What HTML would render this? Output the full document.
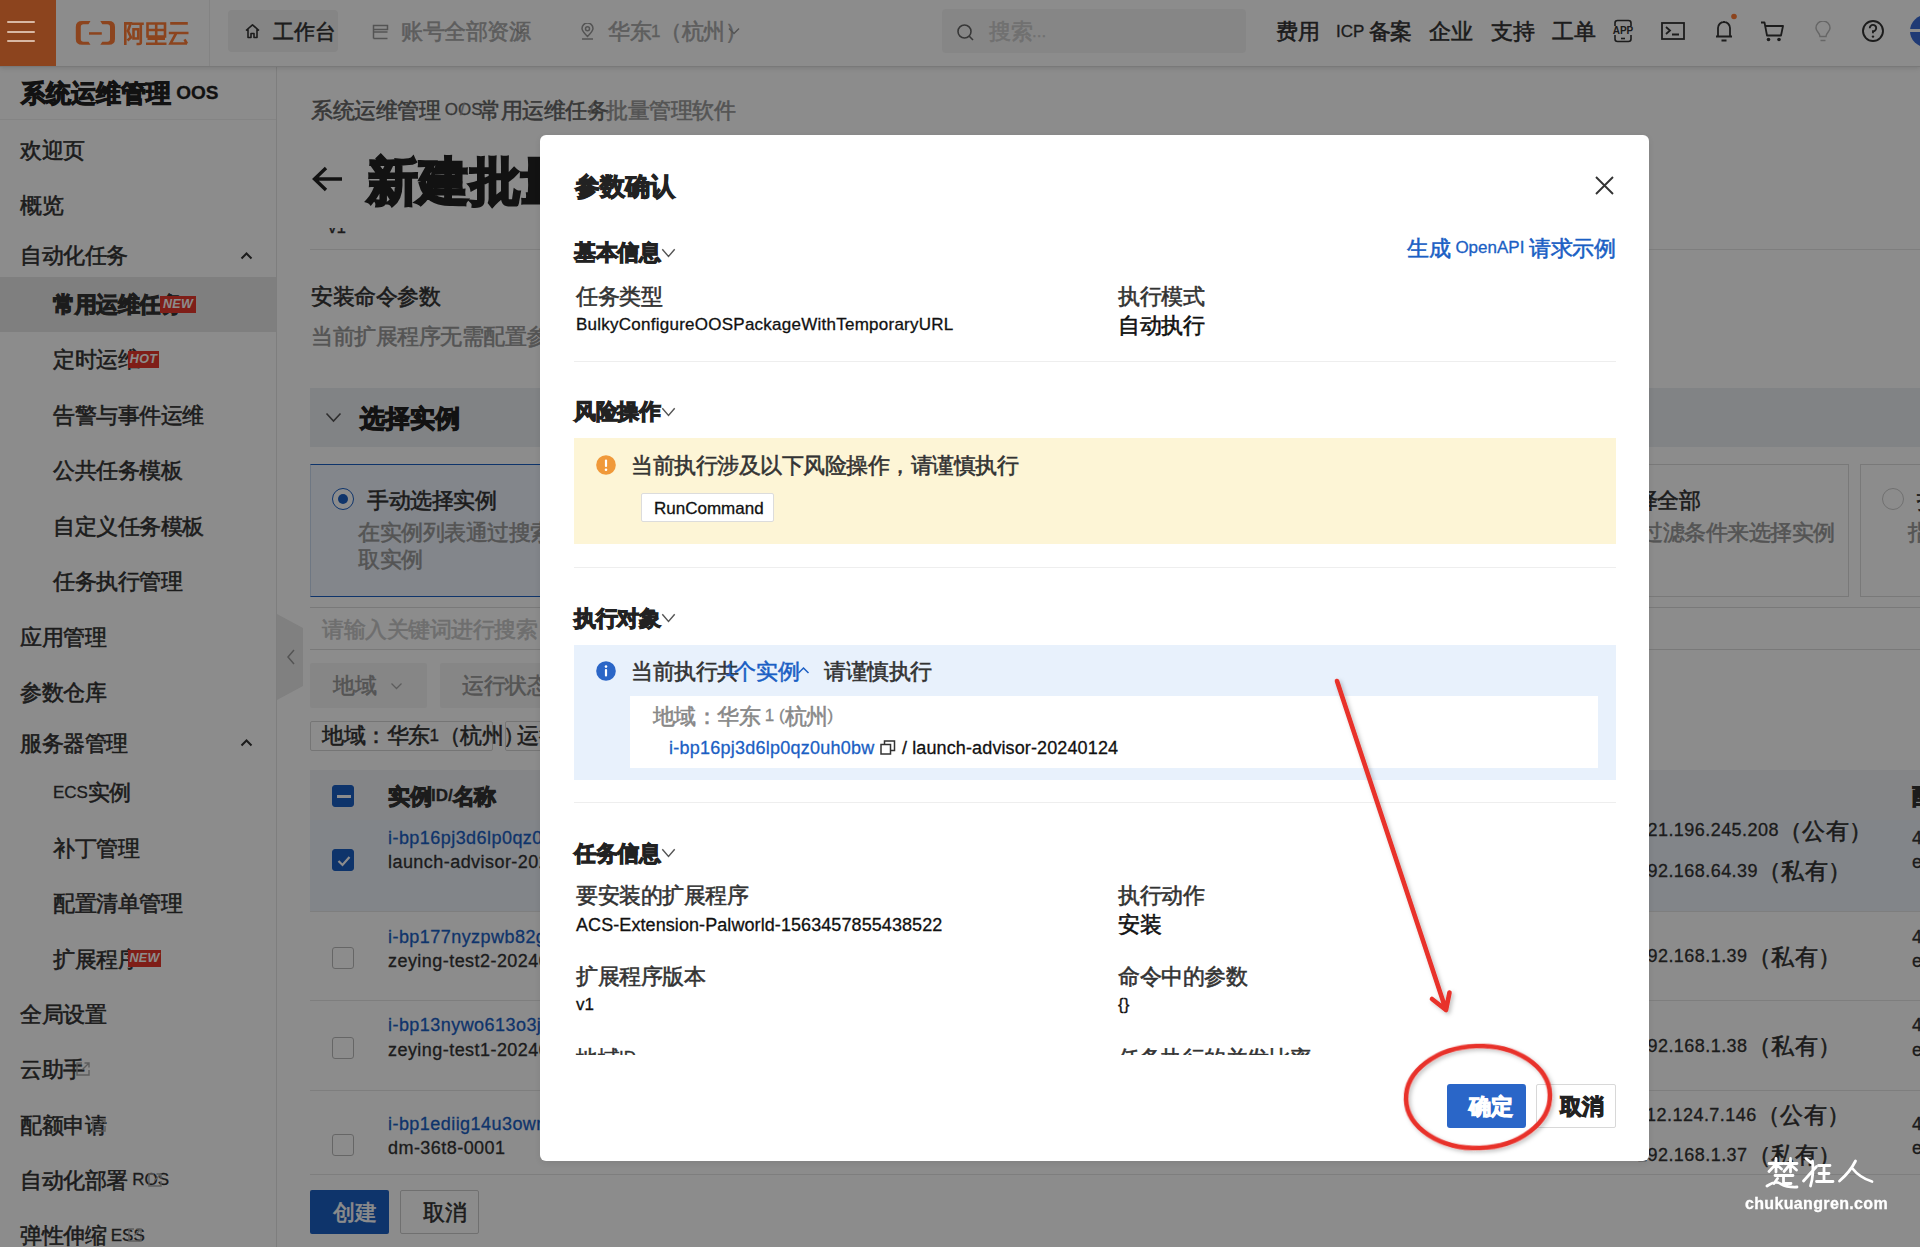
<!DOCTYPE html>
<html><head><meta charset="utf-8"><title>参数确认</title><style>
*{box-sizing:content-box}
html,body{margin:0;padding:0;width:1920px;height:1247px;overflow:hidden;background:#fff}
body{position:relative;font-family:"Liberation Sans",sans-serif;}
.r{position:absolute}
.t{position:absolute;white-space:nowrap;line-height:1;-webkit-text-stroke:.3px currentColor}
.c{line-height:0;position:relative;top:.13em;-webkit-text-stroke:.55px currentColor}
.bd .c{-webkit-text-stroke:var(--st,1.1px) currentColor}
.c2{font-size:1em}
.badge{background:#e8382c;color:#fff;font:italic bold 12.5px/17px "Liberation Sans",sans-serif;text-align:center;letter-spacing:.3px}
.cbx{width:22px;height:22px;box-sizing:border-box;border:1.5px solid #bbb;border-radius:3px;background:#fff}
.cbx.on{background:#1b5fc4;border-color:#1b5fc4}
</style></head><body>
<div class="r" style="left:0px;top:0px;width:1920px;height:66px;background:#fff;box-shadow:0 1px 0 #dcdcdc,0 2px 5px rgba(0,0,0,.14);z-index:2"></div>
<div class="r" style="left:0;top:0;width:1920px;height:66px;z-index:3"><div class="r" style="left:0px;top:0px;width:56px;height:66px;background:#ff7d37"></div>
<svg class="r" style="left:0;top:0" width="200" height="66" viewBox="0 0 200 66"><g fill="#ff7d37"><path d="M90.5 21.1H82Q75.8 21.1 75.8 27V39Q75.8 44.8 82 44.8H90.5L88.5 41.8H83.5Q80.8 41.8 80.8 39V27Q80.8 24.2 83.5 24.2H88.5Z"/><path d="M100.3 21.1H108.8Q115 21.1 115 27V39Q115 44.8 108.8 44.8H100.3L102.3 41.8H107.3Q110 41.8 110 39V27Q110 24.2 107.3 24.2H102.3Z"/><rect x="89" y="32.2" width="12.8" height="2.5"/></g><g fill="none" stroke="#ff7d37" stroke-width="2.6" stroke-linejoin="miter"><path d="M125.3 45V23.4H130.6L128 31 131 37.5 127.5 40.5"/><path d="M131.5 23.7H143.8M140.8 23.7V42.5Q140.8 44 139 44H136.5"/><path d="M133.5 29.3H138.3V38.5H133.5Z"/><path d="M147.5 23.5H165V36.5H147.5ZM147.5 30H165M156.2 23.5V43.5M147.5 38.8H165M146 43.7H166.5"/><path d="M170.2 23.4H187.8M168.8 33H188.5M176 33.5L170.5 43.5H187M184.5 39.3L187 43.6"/></g></svg>
<div class="r" style="left:209px;top:0px;width:1px;height:66px;background:#eee"></div>
<div class="r" style="left:228px;top:10px;width:110px;height:42px;background:#f2f2f2;border-radius:4px"></div>
<svg class="r" style="left:244px;top:23px" width="17" height="16" viewBox="0 0 17 16"><path d="M2 7.5L8.5 1.8 15 7.5M4 6V14.5H7V10.5H10V14.5H13V6" fill="none" stroke="#333" stroke-width="1.6" stroke-linejoin="round"/></svg>
<div class="t" style="left:273px;top:23.0px;font-size:16px;color:#333;"><span class="c" style="font-size:21px;letter-spacing:0px">工作台</span></div>
<svg class="r" style="left:372px;top:24px" width="17" height="16" viewBox="0 0 17 16"><path d="M1.5 1.5H15.5V5.5H1.5ZM1.5 8H15.5M1.5 14.5H15.5M1.5 5.5V14.5" fill="none" stroke="#999" stroke-width="1.5"/></svg>
<div class="t" style="left:401px;top:22.5px;font-size:17px;color:#aaa;"><span class="c" style="font-size:22px;letter-spacing:-0.5px">账号全部资源</span></div>
<svg class="r" style="left:514px;top:27px" width="12" height="8" viewBox="0 0 12 8"><path d="M1 1.5L6 6.5 11 1.5" fill="none" stroke="#999" stroke-width="1.5"/></svg>
<svg class="r" style="left:580px;top:23px" width="15" height="17" viewBox="0 0 15 17"><path d="M7.5 13.5C3 9 2 7 2 5.5A5.5 5.5 0 0 1 13 5.5C13 7 12 9 7.5 13.5ZM2 16H13" fill="none" stroke="#999" stroke-width="1.5"/><circle cx="7.5" cy="5.7" r="2" fill="none" stroke="#999" stroke-width="1.5"/></svg>
<div class="t" style="left:608px;top:22.5px;font-size:17px;color:#aaa;"><span class="c" style="font-size:22px;letter-spacing:-0.5px">华东</span>1<span class="c" style="font-size:22px;letter-spacing:-0.5px">（杭州）</span></div>
<svg class="r" style="left:728px;top:27px" width="12" height="8" viewBox="0 0 12 8"><path d="M1 1.5L6 6.5 11 1.5" fill="none" stroke="#999" stroke-width="1.5"/></svg>
<div class="r" style="left:942px;top:9px;width:304px;height:44px;background:#f5f5f5;border-radius:4px"></div>
<svg class="r" style="left:956px;top:23px" width="19" height="19" viewBox="0 0 19 19"><circle cx="8.5" cy="8.5" r="6.5" fill="none" stroke="#666" stroke-width="1.6"/><path d="M13.3 13.3L17 17" stroke="#666" stroke-width="1.6"/></svg>
<div class="t" style="left:989px;top:22.5px;font-size:17px;color:#ccc;"><span class="c" style="font-size:22px;letter-spacing:-0.5px">搜索</span>...</div>
<div class="t" style="left:1276px;top:22.5px;font-size:17px;color:#333;"><span class="c" style="font-size:22px;letter-spacing:-0.5px">费用</span></div>
<div class="t" style="left:1336px;top:22.5px;font-size:17px;color:#333;">ICP <span class="c" style="font-size:22px;letter-spacing:-0.5px">备案</span></div>
<div class="t" style="left:1429px;top:22.5px;font-size:17px;color:#333;"><span class="c" style="font-size:22px;letter-spacing:-0.5px">企业</span></div>
<div class="t" style="left:1491px;top:22.5px;font-size:17px;color:#333;"><span class="c" style="font-size:22px;letter-spacing:-0.5px">支持</span></div>
<div class="t" style="left:1552px;top:22.5px;font-size:17px;color:#333;"><span class="c" style="font-size:22px;letter-spacing:-0.5px">工单</span></div>
<svg class="r" style="left:1610px;top:19px" width="26" height="24" viewBox="0 0 26 24"><rect x="5" y="1.5" width="16" height="21" rx="2.5" fill="none" stroke="#333" stroke-width="1.6"/><rect x="1" y="7" width="24" height="9" fill="#fff"/><text x="13" y="15" font-size="10" font-family="Liberation Sans" font-weight="bold" text-anchor="middle" fill="#333">APP</text><path d="M11 19.5H15" stroke="#333" stroke-width="1.6"/></svg>
<svg class="r" style="left:1661px;top:22px" width="24" height="18" viewBox="0 0 24 18"><rect x="1" y="1" width="22" height="16" fill="none" stroke="#333" stroke-width="1.8"/><path d="M5 5L9 8.5 5 12M11 12.5H18" fill="none" stroke="#333" stroke-width="1.8"/></svg>
<svg class="r" style="left:1713px;top:13px" width="26" height="29" viewBox="0 0 26 29"><path d="M3 23.5H19M5 23V15A6 6 0 0 1 17 15V23M11 8V10M8.5 27.5H13.5" fill="none" stroke="#333" stroke-width="1.8"/><circle cx="21" cy="3.5" r="2.8" fill="#ff7d37"/></svg>
<svg class="r" style="left:1760px;top:21px" width="25" height="21" viewBox="0 0 25 21"><path d="M1 1.5H4.5L7 14.5H21L23 5H5.5" fill="none" stroke="#333" stroke-width="1.8" stroke-linejoin="round"/><circle cx="8.5" cy="18.5" r="1.8" fill="#333"/><circle cx="19" cy="18.5" r="1.8" fill="#333"/></svg>
<svg class="r" style="left:1814px;top:21px" width="18" height="21" viewBox="0 0 18 21"><path d="M6 15.5C6 12 2 10.5 2 7A7 7 0 0 1 16 7C16 10.5 12 12 12 15.5ZM6.5 19.5H11.5" fill="none" stroke="#bbb" stroke-width="1.5"/></svg>
<svg class="r" style="left:1861px;top:19px" width="24" height="24" viewBox="0 0 24 24"><circle cx="12" cy="12" r="10" fill="none" stroke="#333" stroke-width="1.9"/><path d="M8.8 9.2A3.2 3.2 0 1 1 12 12.3V14.3" fill="none" stroke="#333" stroke-width="1.9"/><circle cx="12" cy="17.6" r="1.2" fill="#333"/></svg>
<div class="r" style="left:1910px;top:15px;width:32px;height:32px;border-radius:50%;background:#3a6ad6"></div>
<div class="r" style="left:1910px;top:29px;width:10px;height:3px;background:#fff"></div>
</div>
<div class="r" style="left:0px;top:66px;width:276px;height:1181px;background:#fff;border-right:1px solid #e6e6e6"></div>
<div class="t bd" style="left:21px;top:82.9px;font-size:19px;color:#222;font-weight:bold;"><span class="c" style="font-size:25px;letter-spacing:0px">系统运维管理</span> OOS</div>
<div class="r" style="left:0px;top:119px;width:276px;height:1px;background:#f0f0f0"></div>
<div class="r" style="left:0px;top:277px;width:276px;height:55px;background:#e8e8e8"></div>
<div class="t" style="left:20px;top:141.0px;font-size:17px;color:#333;"><span class="c" style="font-size:22px;letter-spacing:-0.5px">欢迎页</span></div>
<div class="t" style="left:20px;top:196.5px;font-size:17px;color:#333;"><span class="c" style="font-size:22px;letter-spacing:-0.5px">概览</span></div>
<div class="t" style="left:20px;top:246.0px;font-size:17px;color:#333;"><span class="c" style="font-size:22px;letter-spacing:-0.5px">自动化任务</span></div>
<div class="t bd" style="left:53px;top:295.5px;font-size:17px;color:#333;font-weight:bold;"><span class="c" style="font-size:22px;letter-spacing:-0.5px">常用运维任务</span></div>
<div class="t" style="left:53px;top:350.5px;font-size:17px;color:#333;"><span class="c" style="font-size:22px;letter-spacing:-0.5px">定时运维</span></div>
<div class="t" style="left:53px;top:406.0px;font-size:17px;color:#333;"><span class="c" style="font-size:22px;letter-spacing:-0.5px">告警与事件运维</span></div>
<div class="t" style="left:53px;top:461.5px;font-size:17px;color:#333;"><span class="c" style="font-size:22px;letter-spacing:-0.5px">公共任务模板</span></div>
<div class="t" style="left:53px;top:517.0px;font-size:17px;color:#333;"><span class="c" style="font-size:22px;letter-spacing:-0.5px">自定义任务模板</span></div>
<div class="t" style="left:53px;top:572.5px;font-size:17px;color:#333;"><span class="c" style="font-size:22px;letter-spacing:-0.5px">任务执行管理</span></div>
<div class="t" style="left:20px;top:628.5px;font-size:17px;color:#333;"><span class="c" style="font-size:22px;letter-spacing:-0.5px">应用管理</span></div>
<div class="t" style="left:20px;top:683.5px;font-size:17px;color:#333;"><span class="c" style="font-size:22px;letter-spacing:-0.5px">参数仓库</span></div>
<div class="t" style="left:20px;top:734.0px;font-size:17px;color:#333;"><span class="c" style="font-size:22px;letter-spacing:-0.5px">服务器管理</span></div>
<div class="t" style="left:53px;top:783.5px;font-size:17px;color:#333;">ECS<span class="c" style="font-size:22px;letter-spacing:-0.5px">实例</span></div>
<div class="t" style="left:53px;top:839.0px;font-size:17px;color:#333;"><span class="c" style="font-size:22px;letter-spacing:-0.5px">补丁管理</span></div>
<div class="t" style="left:53px;top:894.0px;font-size:17px;color:#333;"><span class="c" style="font-size:22px;letter-spacing:-0.5px">配置清单管理</span></div>
<div class="t" style="left:53px;top:950.0px;font-size:17px;color:#333;"><span class="c" style="font-size:22px;letter-spacing:-0.5px">扩展程序</span></div>
<div class="t" style="left:20px;top:1005.0px;font-size:17px;color:#333;"><span class="c" style="font-size:22px;letter-spacing:-0.5px">全局设置</span></div>
<div class="t" style="left:20px;top:1060.5px;font-size:17px;color:#333;"><span class="c" style="font-size:22px;letter-spacing:-0.5px">云助手</span></div>
<div class="t" style="left:20px;top:1116.0px;font-size:17px;color:#333;"><span class="c" style="font-size:22px;letter-spacing:-0.5px">配额申请</span></div>
<div class="t" style="left:20px;top:1171.0px;font-size:17px;color:#333;"><span class="c" style="font-size:22px;letter-spacing:-0.5px">自动化部署</span> ROS</div>
<div class="t" style="left:20px;top:1226.5px;font-size:17px;color:#333;"><span class="c" style="font-size:22px;letter-spacing:-0.5px">弹性伸缩</span> ESS</div>
<svg class="r" style="left:240px;top:251.0px" width="13" height="9" viewBox="0 0 13 9"><path d="M1.5 7.5L6.5 2.5 11.5 7.5" fill="none" stroke="#333" stroke-width="2"/></svg>
<svg class="r" style="left:240px;top:738.0px" width="13" height="9" viewBox="0 0 13 9"><path d="M1.5 7.5L6.5 2.5 11.5 7.5" fill="none" stroke="#333" stroke-width="2"/></svg>
<div class="r badge" style="left:160px;top:295.5px;width:36px;height:17px">NEW</div>
<div class="r badge" style="left:128px;top:351.0px;width:31px;height:17px">HOT</div>
<div class="r badge" style="left:128px;top:950.0px;width:33px;height:17px">NEW</div>
<svg class="r" style="left:75px;top:1061px" width="16" height="16" viewBox="0 0 16 16"><path d="M7 2H2V14H14V9M9.5 2H14V6.5M14 2L7.5 8.5" fill="none" stroke="#aaa" stroke-width="1.4"/></svg>
<svg class="r" style="left:91px;top:1116.5px" width="16" height="16" viewBox="0 0 16 16"><path d="M7 2H2V14H14V9M9.5 2H14V6.5M14 2L7.5 8.5" fill="none" stroke="#aaa" stroke-width="1.4"/></svg>
<svg class="r" style="left:147px;top:1171.5px" width="16" height="16" viewBox="0 0 16 16"><path d="M7 2H2V14H14V9M9.5 2H14V6.5M14 2L7.5 8.5" fill="none" stroke="#aaa" stroke-width="1.4"/></svg>
<svg class="r" style="left:127px;top:1227px" width="16" height="16" viewBox="0 0 16 16"><path d="M7 2H2V14H14V9M9.5 2H14V6.5M14 2L7.5 8.5" fill="none" stroke="#aaa" stroke-width="1.4"/></svg>
<div class="r" style="left:277px;top:66px;width:1643px;height:1181px;background:#fff"></div>
<div class="t" style="left:311px;top:101.0px;font-size:17px;color:#666;"><span class="c" style="font-size:22px;letter-spacing:-0.5px">系统运维管理</span> OOS</div>
<div class="t" style="left:460px;top:101.0px;font-size:17px;color:#999;">/</div>
<div class="t" style="left:479px;top:101.0px;font-size:17px;color:#666;"><span class="c" style="font-size:22px;letter-spacing:-0.5px">常用运维任务</span></div>
<div class="t" style="left:589px;top:101.0px;font-size:17px;color:#999;">/</div>
<div class="t" style="left:606px;top:101.0px;font-size:17px;color:#999;"><span class="c" style="font-size:22px;letter-spacing:-0.5px">批量管理软件</span></div>
<svg class="r" style="left:311px;top:165px" width="33" height="28" viewBox="0 0 33 28"><path d="M31 14H4M15 3L3.5 14 15 25" fill="none" stroke="#222" stroke-width="3.4"/></svg>
<div class="t bd" style="left:367px;top:160.4px;font-size:38px;color:#222;font-weight:bold;--st:2.6px"><span class="c" style="font-size:51px;letter-spacing:0.3px">新建批量管理软件</span></div>
<div class="r" style="left:326px;top:228px;width:30px;height:6px;overflow:hidden"><div class="t" style="left:2px;top:-9px;font-size:17px;color:#333">v1</div></div>
<div class="r" style="left:310px;top:249px;width:1610px;height:1px;background:#e5e5e5"></div>
<div class="t" style="left:311px;top:287.0px;font-size:17px;color:#333;"><span class="c" style="font-size:22px;letter-spacing:-0.5px">安装命令参数</span></div>
<div class="t" style="left:311px;top:327.0px;font-size:17px;color:#999;"><span class="c" style="font-size:22px;letter-spacing:-0.5px">当前扩展程序无需配置参数</span></div>
<div class="r" style="left:310px;top:388px;width:1610px;height:59px;background:#eceef2"></div>
<svg class="r" style="left:325px;top:412px" width="17" height="11" viewBox="0 0 17 11"><path d="M1.5 1.5L8.5 9 15.5 1.5" fill="none" stroke="#555" stroke-width="1.6"/></svg>
<div class="t bd" style="left:360px;top:407.4px;font-size:19px;color:#222;font-weight:bold;"><span class="c" style="font-size:25px;letter-spacing:0px">选择实例</span></div>
<div class="r" style="left:310px;top:464px;width:763px;height:133px;background:#eef4fd;border:1px solid #1b5fc4;border-left-color:#c9d9ef;box-sizing:border-box"></div>
<div class="r" style="left:332px;top:488px;width:22px;height:22px;border:1.5px solid #1b5fc4;border-radius:50%;box-sizing:border-box;background:#fff"></div>
<div class="r" style="left:338px;top:494px;width:10px;height:10px;border-radius:50%;background:#1b5fc4"></div>
<div class="t" style="left:367px;top:491.0px;font-size:17px;color:#333;"><span class="c" style="font-size:22px;letter-spacing:-0.5px">手动选择实例</span></div>
<div class="t" style="left:358px;top:523.5px;font-size:17px;color:#999;"><span class="c" style="font-size:22px;letter-spacing:-0.5px">在实例列表通过搜索条件选</span></div>
<div class="t" style="left:358px;top:550.5px;font-size:17px;color:#999;"><span class="c" style="font-size:22px;letter-spacing:-0.5px">取实例</span></div>
<div class="r" style="left:1550px;top:464px;width:299px;height:133px;background:#fff;border:1px solid #ddd;box-sizing:border-box"></div>
<div class="r" style="left:1572px;top:488px;width:22px;height:22px;border:1.5px solid #ccc;border-radius:50%;box-sizing:border-box"></div>
<div class="t" style="left:1614px;top:491.0px;font-size:17px;color:#333;"><span class="c" style="font-size:22px;letter-spacing:-0.5px">选择全部</span></div>
<div class="t" style="left:1598px;top:523.5px;font-size:17px;color:#999;"><span class="c" style="font-size:22px;letter-spacing:-0.5px">通过过滤条件来选择实例</span></div>
<div class="r" style="left:1860px;top:464px;width:340px;height:133px;background:#fff;border:1px solid #ddd;box-sizing:border-box"></div>
<div class="r" style="left:1882px;top:488px;width:22px;height:22px;border:1.5px solid #ccc;border-radius:50%;box-sizing:border-box"></div>
<div class="t" style="left:1917px;top:491.0px;font-size:17px;color:#333;"><span class="c" style="font-size:22px;letter-spacing:-0.5px">指定</span></div>
<div class="t" style="left:1908px;top:523.5px;font-size:17px;color:#999;"><span class="c" style="font-size:22px;letter-spacing:-0.5px">指定实例</span></div>
<div class="r" style="left:310px;top:607px;width:1610px;height:43px;border-top:1px solid #ddd;border-bottom:1px solid #ddd;box-sizing:border-box"></div>
<div class="t" style="left:322px;top:620.0px;font-size:17px;color:#c8c8c8;"><span class="c" style="font-size:22px;letter-spacing:-0.5px">请输入关键词进行搜索</span></div>
<div class="r" style="left:310px;top:663px;width:117px;height:45px;background:#f5f5f5;border-radius:2px"></div>
<div class="t" style="left:333px;top:676.5px;font-size:17px;color:#999;"><span class="c" style="font-size:22px;letter-spacing:-0.5px">地域</span></div>
<svg class="r" style="left:390px;top:682px" width="13" height="8" viewBox="0 0 13 8"><path d="M1.5 1.5L6.5 6.5 11.5 1.5" fill="none" stroke="#aaa" stroke-width="1.3"/></svg>
<div class="r" style="left:440px;top:663px;width:160px;height:45px;background:#f5f5f5;border-radius:2px"></div>
<div class="t" style="left:462px;top:676.5px;font-size:17px;color:#999;"><span class="c" style="font-size:22px;letter-spacing:-0.5px">运行状态</span></div>
<div class="r" style="left:310px;top:721px;width:183px;height:30px;border:1px solid #d5d5d5;box-sizing:border-box;border-radius:2px"></div>
<div class="t" style="left:322px;top:726.5px;font-size:17px;color:#333;"><span class="c" style="font-size:22px;letter-spacing:-0.5px">地域：华东</span>1<span class="c" style="font-size:22px;letter-spacing:-0.5px">（杭州）</span></div>
<div class="r" style="left:505px;top:721px;width:135px;height:30px;border:1px solid #d5d5d5;box-sizing:border-box;border-radius:2px"></div>
<div class="t" style="left:517px;top:726.5px;font-size:17px;color:#333;"><span class="c" style="font-size:22px;letter-spacing:-0.5px">运行状态</span></div>
<div class="r" style="left:310px;top:770px;width:1610px;height:50px;background:#f1f3f6"></div>
<div class="r cbx on" style="left:332px;top:785px"><div style="position:absolute;left:4px;top:9px;width:14px;height:3px;background:#fff"></div></div>
<div class="t bd" style="left:388px;top:787.0px;font-size:17px;color:#333;font-weight:bold;"><span class="c" style="font-size:22px;letter-spacing:-0.5px">实例</span>ID/<span class="c" style="font-size:22px;letter-spacing:-0.5px">名称</span></div>
<div class="t bd" style="left:1912px;top:787.0px;font-size:17px;color:#333;font-weight:bold;"><span class="c" style="font-size:22px;letter-spacing:-0.5px">配置</span></div>
<div class="r" style="left:310px;top:820px;width:1610px;height:92px;background:#edf2f9"></div>
<div class="r cbx on" style="left:332px;top:849px"><svg style="position:absolute;left:3px;top:4px" width="16" height="14" viewBox="0 0 16 14"><path d="M2.5 7L6.5 11 13.5 3" fill="none" stroke="#fff" stroke-width="2.2"/></svg></div>
<div class="r" style="left:310px;top:911px;width:1610px;height:1px;background:#e5e5e5"></div>
<div class="t" style="left:388px;top:829.0px;font-size:18px;color:#1b5fc4;letter-spacing:0.45px;">i-bp16pj3d6lp0qz0uh0bw</div>
<div class="t" style="left:388px;top:853.0px;font-size:18px;color:#333;letter-spacing:0.45px;">launch-advisor-20240124</div>
<div class="t" style="left:1637px;top:821.0px;font-size:18px;color:#333;letter-spacing:0.45px;">121.196.245.208<span class="c" style="font-size:23px;letter-spacing:0.5px">（公有）</span></div>
<div class="t" style="left:1637px;top:861.5px;font-size:18px;color:#333;letter-spacing:0.45px;">192.168.64.39<span class="c" style="font-size:23px;letter-spacing:0.5px">（私有）</span></div>
<div class="t" style="left:1912px;top:829.0px;font-size:18px;color:#333;">4 vCPU</div>
<div class="t" style="left:1912px;top:853.0px;font-size:18px;color:#333;">ecs.c6</div>
<div class="r cbx" style="left:332px;top:947px"></div>
<div class="r" style="left:310px;top:1000px;width:1610px;height:1px;background:#e5e5e5"></div>
<div class="t" style="left:388px;top:927.5px;font-size:18px;color:#1b5fc4;letter-spacing:0.45px;">i-bp177nyzpwb82g</div>
<div class="t" style="left:388px;top:952.0px;font-size:18px;color:#333;letter-spacing:0.45px;">zeying-test2-20240124</div>
<div class="t" style="left:1637px;top:947.0px;font-size:18px;color:#333;letter-spacing:0.45px;">192.168.1.39<span class="c" style="font-size:23px;letter-spacing:0.5px">（私有）</span></div>
<div class="t" style="left:1912px;top:927.5px;font-size:18px;color:#333;">4 vCPU</div>
<div class="t" style="left:1912px;top:952.0px;font-size:18px;color:#333;">ecs.c6</div>
<div class="r cbx" style="left:332px;top:1036.5px"></div>
<div class="r" style="left:310px;top:1090px;width:1610px;height:1px;background:#e5e5e5"></div>
<div class="t" style="left:388px;top:1016.0px;font-size:18px;color:#1b5fc4;letter-spacing:0.45px;">i-bp13nywo613o3jl</div>
<div class="t" style="left:388px;top:1040.5px;font-size:18px;color:#333;letter-spacing:0.45px;">zeying-test1-20240124</div>
<div class="t" style="left:1637px;top:1036.5px;font-size:18px;color:#333;letter-spacing:0.45px;">192.168.1.38<span class="c" style="font-size:23px;letter-spacing:0.5px">（私有）</span></div>
<div class="t" style="left:1912px;top:1016.0px;font-size:18px;color:#333;">4 vCPU</div>
<div class="t" style="left:1912px;top:1040.5px;font-size:18px;color:#333;">ecs.c6</div>
<div class="r cbx" style="left:332px;top:1134px"></div>
<div class="r" style="left:310px;top:1174px;width:1610px;height:1px;background:#e5e5e5"></div>
<div class="t" style="left:388px;top:1114.5px;font-size:18px;color:#1b5fc4;letter-spacing:0.45px;">i-bp1ediig14u3owr</div>
<div class="t" style="left:388px;top:1138.5px;font-size:18px;color:#333;letter-spacing:0.45px;">dm-36t8-0001</div>
<div class="t" style="left:1637px;top:1105.5px;font-size:18px;color:#333;letter-spacing:0.45px;">112.124.7.146<span class="c" style="font-size:23px;letter-spacing:0.5px">（公有）</span></div>
<div class="t" style="left:1637px;top:1145.5px;font-size:18px;color:#333;letter-spacing:0.45px;">192.168.1.37<span class="c" style="font-size:23px;letter-spacing:0.5px">（私有）</span></div>
<div class="t" style="left:1912px;top:1114.5px;font-size:18px;color:#333;">4 vCPU</div>
<div class="t" style="left:1912px;top:1138.5px;font-size:18px;color:#333;">ecs.c6</div>
<div class="r" style="left:310px;top:1190px;width:79px;height:44px;background:#1b5fc4;border-radius:2px"></div>
<div class="t" style="left:333px;top:1203.0px;font-size:17px;color:#fff;"><span class="c" style="font-size:22px;letter-spacing:-0.5px">创建</span></div>
<div class="r" style="left:400px;top:1190px;width:79px;height:44px;background:#fff;border:1px solid #ccc;box-sizing:border-box;border-radius:2px"></div>
<div class="t" style="left:423px;top:1203.0px;font-size:17px;color:#333;"><span class="c" style="font-size:22px;letter-spacing:-0.5px">取消</span></div>
<svg class="r" style="left:277px;top:614px" width="27" height="86" viewBox="0 0 27 86"><path d="M0 0L26 14V72L0 86Z" fill="#e9e9e9"/><path d="M17 50L11 43 17 36" fill="none" stroke="#999" stroke-width="1.5"/></svg>
<div class="r" style="left:0;top:0;width:1920px;height:1247px;background:rgba(0,0,0,.45);z-index:5"></div>
<div class="r" style="left:7px;top:21px;width:28px;height:2.3999999999999986px;background:#d8b8a4;border-radius:1px;z-index:6"></div>
<div class="r" style="left:7px;top:30.5px;width:28px;height:2.3999999999999986px;background:#d8b8a4;border-radius:1px;z-index:6"></div>
<div class="r" style="left:7px;top:40px;width:28px;height:2.3999999999999986px;background:#d8b8a4;border-radius:1px;z-index:6"></div>
<div class="r" style="left:540px;top:135px;width:1109px;height:1026px;background:#fff;border-radius:6px;box-shadow:0 2px 6px rgba(0,0,0,.08);z-index:10"></div>
<div class="r" style="left:0;top:0;width:1920px;height:1247px;z-index:11"><div class="t bd" style="left:575px;top:175.9px;font-size:19px;color:#222;font-weight:bold;"><span class="c" style="font-size:25px;letter-spacing:0px">参数确认</span></div>
<svg class="r" style="left:1594px;top:175px" width="21" height="21" viewBox="0 0 21 21"><path d="M2 2L19 19M19 2L2 19" stroke="#333" stroke-width="1.9"/></svg>
<div class="t bd" style="left:574px;top:243.5px;font-size:17px;color:#222;font-weight:bold;"><span class="c" style="font-size:22px;letter-spacing:-0.5px">基本信息</span></div>
<svg class="r" style="left:661px;top:248px" width="15" height="10" viewBox="0 0 15 10"><path d="M1.3 1.2L7.5 8.5 13.7 1.2" fill="none" stroke="#555" stroke-width="1.4"/></svg>
<div class="t" style="right:304.5px;top:239.0px;font-size:17px;color:#1b5fc4;"><span class="c" style="font-size:22px;letter-spacing:-0.4px">生成</span> OpenAPI <span class="c" style="font-size:22px;letter-spacing:-0.4px">请求示例</span></div>
<div class="t" style="left:576px;top:287.0px;font-size:17px;color:#333;"><span class="c" style="font-size:22px;letter-spacing:-0.5px">任务类型</span></div>
<div class="t" style="left:576px;top:316.0px;font-size:17px;color:#111;letter-spacing:0.25px;">BulkyConfigureOOSPackageWithTemporaryURL</div>
<div class="t" style="left:1118px;top:287.0px;font-size:17px;color:#333;"><span class="c" style="font-size:22px;letter-spacing:-0.5px">执行模式</span></div>
<div class="t" style="left:1118px;top:316.5px;font-size:17px;color:#111;"><span class="c" style="font-size:22px;letter-spacing:-0.5px">自动执行</span></div>
<div class="r" style="left:574px;top:361px;width:1042px;height:1px;background:#eee"></div>
<div class="t bd" style="left:574px;top:402.5px;font-size:17px;color:#222;font-weight:bold;"><span class="c" style="font-size:22px;letter-spacing:-0.5px">风险操作</span></div>
<svg class="r" style="left:661px;top:406.5px" width="15" height="10" viewBox="0 0 15 10"><path d="M1.3 1.2L7.5 8.5 13.7 1.2" fill="none" stroke="#555" stroke-width="1.4"/></svg>
<div class="r" style="left:574px;top:438px;width:1042px;height:106px;background:#fdf5d6"></div>
<svg class="r" style="left:596px;top:455px" width="20" height="20" viewBox="0 0 20 20"><circle cx="10" cy="10" r="9.8" fill="#f0993a"/><rect x="8.9" y="4.5" width="2.2" height="7.5" rx="1" fill="#fff"/><circle cx="10" cy="14.8" r="1.3" fill="#fff"/></svg>
<div class="t" style="left:631px;top:456.0px;font-size:17px;color:#333;"><span class="c" style="font-size:22px;letter-spacing:-0.5px">当前执行涉及以下风险操作，请谨慎执行</span></div>
<div class="r" style="left:641px;top:493px;width:133px;height:29px;background:#fff;border:1px solid #dcdcdc;box-sizing:border-box;border-radius:2px"></div>
<div class="t" style="left:654px;top:500.0px;font-size:17px;color:#111;">RunCommand</div>
<div class="r" style="left:574px;top:567px;width:1042px;height:1px;background:#eee"></div>
<div class="t bd" style="left:574px;top:609.0px;font-size:17px;color:#222;font-weight:bold;"><span class="c" style="font-size:22px;letter-spacing:-0.5px">执行对象</span></div>
<svg class="r" style="left:661px;top:613px" width="15" height="10" viewBox="0 0 15 10"><path d="M1.3 1.2L7.5 8.5 13.7 1.2" fill="none" stroke="#555" stroke-width="1.4"/></svg>
<div class="r" style="left:574px;top:645px;width:1042px;height:135px;background:#e8f1fc"></div>
<svg class="r" style="left:596px;top:661px" width="20" height="20" viewBox="0 0 20 20"><circle cx="10" cy="10" r="9.8" fill="#2b66c7"/><circle cx="10" cy="5.6" r="1.3" fill="#fff"/><rect x="8.9" y="8" width="2.2" height="7.5" rx="1" fill="#fff"/></svg>
<div class="t" style="left:631px;top:662.0px;font-size:17px;color:#333;"><span class="c" style="font-size:22px;letter-spacing:-0.5px">当前执行共</span></div>
<div class="t" style="left:725px;top:662.0px;font-size:17px;color:#1b5fc4;">1<span class="c" style="font-size:22px;letter-spacing:-0.4px">个实例</span></div>
<svg class="r" style="left:797px;top:666px" width="13" height="9" viewBox="0 0 13 9"><path d="M1.5 7L6.5 2 11.5 7" fill="none" stroke="#1b5fc4" stroke-width="1.5"/></svg>
<div class="t" style="left:824px;top:662.0px;font-size:17px;color:#333;"><span class="c" style="font-size:22px;letter-spacing:-0.5px">请谨慎执行</span></div>
<div class="r" style="left:630px;top:696px;width:968px;height:72px;background:#fff"></div>
<div class="t" style="left:652.5px;top:707.0px;font-size:17px;color:#888;"><span class="c" style="font-size:22px;letter-spacing:-0.5px">地域：华东</span> 1 (<span class="c" style="font-size:22px;letter-spacing:-0.5px">杭州</span>)</div>
<div class="t" style="left:669px;top:738.5px;font-size:18px;color:#1b5fc4;letter-spacing:0.24px;">i-bp16pj3d6lp0qz0uh0bw</div>
<svg class="r" style="left:880px;top:740px" width="16" height="15" viewBox="0 0 16 15"><rect x="1" y="4.5" width="9.5" height="9.5" fill="none" stroke="#333" stroke-width="1.5"/><path d="M4.5 4.5V1H14.5V10.5H10.5" fill="none" stroke="#333" stroke-width="1.5"/></svg>
<div class="t" style="left:902px;top:738.5px;font-size:18px;color:#111;letter-spacing:0.12px;">/ launch-advisor-20240124</div>
<div class="r" style="left:574px;top:802px;width:1042px;height:1px;background:#eee"></div>
<div class="t bd" style="left:574px;top:844.0px;font-size:17px;color:#222;font-weight:bold;"><span class="c" style="font-size:22px;letter-spacing:-0.5px">任务信息</span></div>
<svg class="r" style="left:661px;top:847.5px" width="15" height="10" viewBox="0 0 15 10"><path d="M1.3 1.2L7.5 8.5 13.7 1.2" fill="none" stroke="#555" stroke-width="1.4"/></svg>
<div class="t" style="left:576px;top:886.5px;font-size:17px;color:#333;"><span class="c" style="font-size:22px;letter-spacing:-0.5px">要安装的扩展程序</span></div>
<div class="t" style="left:576px;top:915.5px;font-size:18px;color:#111;letter-spacing:0.08px;">ACS-Extension-Palworld-1563457855438522</div>
<div class="t" style="left:1118px;top:886.5px;font-size:17px;color:#333;"><span class="c" style="font-size:22px;letter-spacing:-0.5px">执行动作</span></div>
<div class="t" style="left:1118px;top:915.5px;font-size:17px;color:#111;"><span class="c" style="font-size:22px;letter-spacing:-0.5px">安装</span></div>
<div class="t" style="left:576px;top:967.0px;font-size:17px;color:#333;"><span class="c" style="font-size:22px;letter-spacing:-0.5px">扩展程序版本</span></div>
<div class="t" style="left:576px;top:996.0px;font-size:17px;color:#111;">v1</div>
<div class="t" style="left:1118px;top:967.0px;font-size:17px;color:#333;"><span class="c" style="font-size:22px;letter-spacing:-0.5px">命令中的参数</span></div>
<div class="t" style="left:1118px;top:996.0px;font-size:17px;color:#111;">{}</div>
<div class="r" style="left:560px;top:1040px;width:1060px;height:15px;overflow:hidden"><div class="t" style="left:16px;top:9.0px;font-size:17px;color:#333;"><span class="c" style="font-size:22px;letter-spacing:-0.5px">地域</span>ID</div>
<div class="t" style="left:558px;top:9.0px;font-size:17px;color:#333;"><span class="c" style="font-size:22px;letter-spacing:-0.5px">任务执行的并发比率</span></div>
</div>
<div class="r" style="left:1447px;top:1084px;width:79px;height:44px;background:#2a66c8;border-radius:3px"></div>
<div class="t bd" style="left:1469px;top:1097.0px;font-size:17px;color:#fff;font-weight:bold;"><span class="c" style="font-size:22px;letter-spacing:-0.5px">确定</span></div>
<div class="r" style="left:1536px;top:1084px;width:80px;height:44px;background:#fff;border:1px solid #d8d8d8;box-sizing:border-box;border-radius:2px"></div>
<div class="t bd" style="left:1560px;top:1097.0px;font-size:17px;color:#222;font-weight:bold;"><span class="c" style="font-size:22px;letter-spacing:-0.5px">取消</span></div>
</div>
<svg class="r" style="left:0;top:0;z-index:20" width="1920" height="1247" viewBox="0 0 1920 1247">
<defs><filter id="sh" x="-20%" y="-20%" width="140%" height="140%"><feDropShadow dx="2" dy="2" stdDeviation="2" flood-color="#000" flood-opacity=".25"/></filter></defs>
<g filter="url(#sh)" fill="none" stroke="#e8302a" stroke-linecap="round" stroke-linejoin="round">
<path d="M1337 681L1446 1010M1432 999L1446 1010 1449.5 992.5" stroke-width="4.6"/>
<ellipse cx="1478" cy="1097" rx="72" ry="51" stroke-width="4.6" transform="rotate(-2 1478 1097)"/>
</g></svg>
<svg class="r" style="left:0;top:0;z-index:21" width="1920" height="1247" viewBox="0 0 1920 1247"><g fill="none" stroke="#fff" stroke-width="2.8" stroke-linecap="round" stroke-linejoin="round">
<path d="M1769 1163.5H1783M1776 1158.5V1172M1775.5 1164.5L1769 1171.5M1777 1165L1781.5 1169"/>
<path d="M1784.5 1163.5H1797M1790.5 1158.5V1172M1790 1164.5L1784 1171.5M1791 1165L1796.5 1170"/>
<path d="M1775 1175.5H1793M1783.5 1175.5V1183.5H1791M1777.5 1178.5L1774 1183.5M1767 1186Q1776 1180 1781 1184Q1787 1187.5 1797 1187"/>
<path d="M1806 1158.5L1811.5 1163M1812.5 1161Q1814 1175 1810.5 1186M1816.5 1166.5L1803.5 1181"/>
<path d="M1818.5 1165.5H1830M1819 1173.5H1829M1816.5 1181.5H1833M1824 1165.5V1181.5"/>
<path d="M1855.5 1161Q1850 1172 1839.5 1181M1852 1168Q1860 1178 1872 1181.5"/>
</g></svg>
<div class="t" style="left:1745px;top:1196px;font-size:16px;font-weight:bold;color:#fff;z-index:21;letter-spacing:.35px">chukuangren.com</div>
</body></html>
